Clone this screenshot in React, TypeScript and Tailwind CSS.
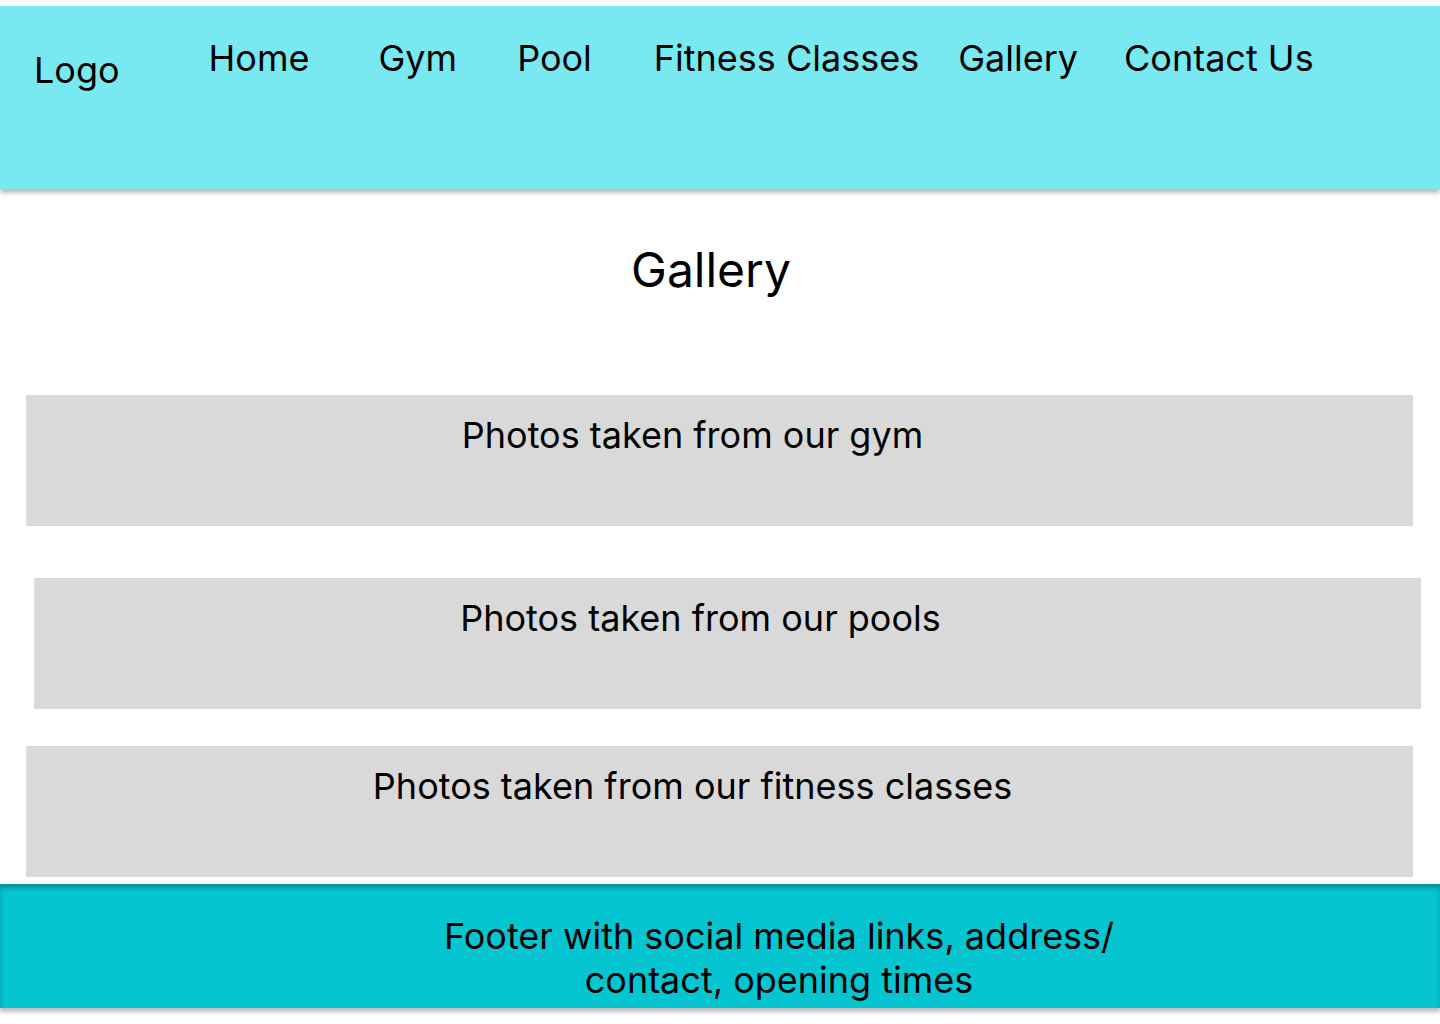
const navLinks = [
  { label: 'Home', className: 'ml-[89px]' },
  { label: 'Gym', className: 'ml-[69px]' },
  { label: 'Pool', className: 'ml-[60px]' },
  { label: 'Fitness Classes', className: 'ml-[62px]' },
  { label: 'Gallery', className: 'ml-[39px]' },
  { label: 'Contact Us', className: 'ml-[46px]' },
];

const sections = [
  { label: 'Photos taken from our gym', className: 'mt-[96px] ml-[26px]' },
  { label: 'Photos taken from our pools', className: 'mt-[52px] ml-[34px]' },
  { label: 'Photos taken from our fitness classes', className: 'mt-[37px] ml-[26px]' },
];

export default function App() {
  return (
    <div
      className="min-h-[1024px] bg-white pt-[6px] text-black"
      style={{ fontFamily: 'Inter, "Noto Sans", sans-serif' }}
    >
      <header className="relative z-10 h-[183px] bg-[#79e9f1] shadow-[0_4px_4px_rgba(0,0,0,0.25)]">
        <nav className="flex items-start pl-[34px] pt-[30px] text-[36px] leading-[44px]">
          <a href="#" className="mt-[12px]">
            Logo
          </a>
          {navLinks.map((link) => (
            <a key={link.label} href="#" className={link.className}>
              {link.label}
            </a>
          ))}
        </nav>
      </header>

      <main>
        <h1 className="mt-[52px] pr-[18px] text-center text-[48px] leading-[58px]">
          Gallery
        </h1>

        {sections.map((section) => (
          <section
            key={section.label}
            className={`h-[131px] w-[1387px] bg-[#d9d9d9] pt-[18px] pr-[54px] text-center text-[36px] leading-[44px] ${section.className}`}
          >
            {section.label}
          </section>
        ))}
      </main>

      <footer className="mt-[7px] h-[124px] bg-[#05c5d1] pt-[30px] pl-[118px] text-center text-[36px] leading-[44px] shadow-[inset_0_4px_4px_rgba(0,0,0,0.25),0_4px_4px_rgba(0,0,0,0.25)]">
        <p>
          Footer with social media links, address/
          <br />
          contact, opening times
        </p>
      </footer>
    </div>
  );
}
